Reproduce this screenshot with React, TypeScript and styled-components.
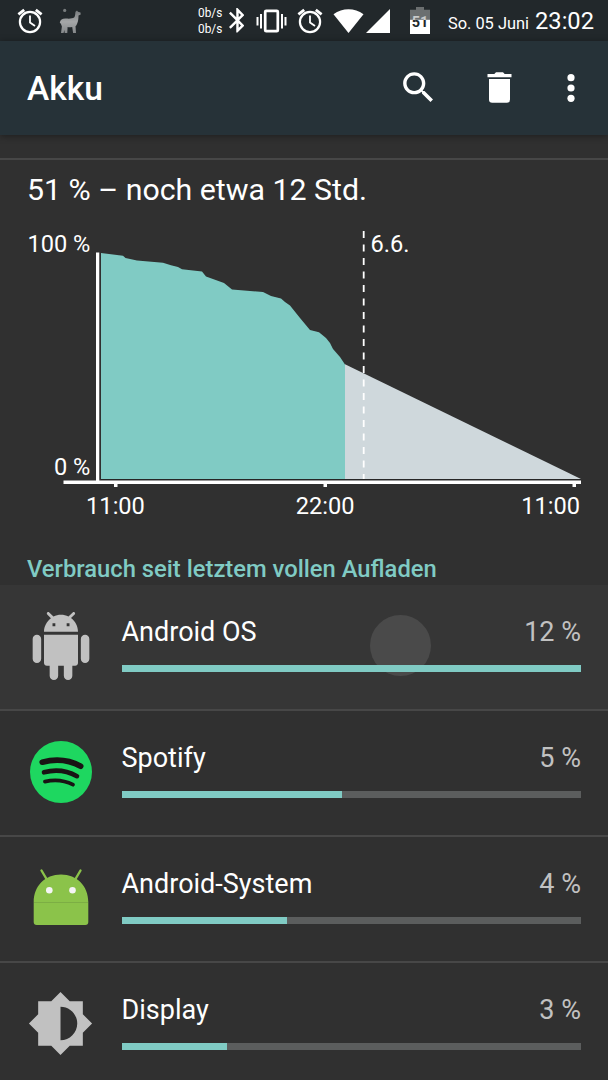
import React from "react";
import styled, { createGlobalStyle } from "styled-components";

const GlobalStyle = createGlobalStyle`
  * { box-sizing: border-box; }
  body {
    margin: 0;
    background: #303030;
    color: #fff;
    font-family: Roboto, "Liberation Sans", sans-serif;
  }
`;

const Screen = styled.div`
  width: 608px;
  height: 1080px;
  overflow: hidden;
  display: flex;
  flex-direction: column;
  background: #303030;
`;

const StatusBar = styled.header`
  height: 41px;
  flex: none;
  display: flex;
  align-items: center;
  padding: 0 14px 0 17px;
  background: #22282b;
`;

const StatusIcon = styled.svg<{ $gap?: number }>`
  flex: none;
  display: block;
  margin-left: ${(p) => p.$gap ?? 0}px;
`;

const Speed = styled.div`
  margin-left: 117px;
  width: 30.5px;
  white-space: nowrap;
  font-size: 13.6px;
  line-height: 15.5px;
  transform: scaleX(0.87);
  transform-origin: left center;
`;

const DateText = styled.span`
  margin-left: auto;
  font-size: 16.4px;
  line-height: 24px;
  padding-top: 6px;
  white-space: nowrap;
`;

const Clock = styled.span`
  margin-left: 6px;
  font-size: 23.7px;
  line-height: 28px;
  padding-top: 1px;
`;

const AppBar = styled.div`
  position: relative;
  height: 94px;
  flex: none;
  display: flex;
  align-items: center;
  padding: 0 16px 0 27px;
  background: #263238;
  box-shadow: 0 1px 7px rgba(0, 0, 0, 0.4);
`;

const Title = styled.h1`
  margin: 2px auto 0 0;
  font-size: 33.5px;
  line-height: 40px;
  font-weight: 500;
`;

const Actions = styled.div`
  display: flex;
  align-items: center;
`;

const ActionButton = styled.button<{ $width: number; $gap?: number }>`
  width: ${(p) => p.$width}px;
  height: 82px;
  margin-left: ${(p) => p.$gap ?? 0}px;
  padding: 0 0 1px;
  border: 0;
  background: none;
  color: #fff;
  display: flex;
  align-items: center;
  justify-content: center;
`;

const Divider = styled.div`
  height: 2px;
  flex: none;
  margin-top: 23px;
  background: #474747;
`;

const Summary = styled.div`
  flex: none;
  padding: 12px 27px;
  font-size: 30.3px;
  line-height: 36px;
`;

const Chart = styled.svg`
  display: block;
  flex: none;
  font-size: 23.6px;
  fill: #fff;
`;

const Category = styled.h2`
  margin: 0;
  height: 55px;
  flex: none;
  padding: 25px 27px 0;
  font-size: 23.78px;
  line-height: 28px;
  font-weight: 500;
  color: #80cbc4;
`;

const Row = styled.div<{ $pressed?: boolean }>`
  position: relative;
  height: 126px;
  flex: none;
  display: flex;
  padding-right: 27px;
  border-bottom: 2px solid #474747;
  background: ${(p) => (p.$pressed ? "#363636" : "transparent")};
`;

const IconCell = styled.div`
  width: 121.5px;
  height: 121px;
  flex: none;
  display: flex;
  align-items: center;
  justify-content: center;
`;

const RowBody = styled.div`
  position: relative;
  flex: 1;
  padding-top: 31px;
`;

const Labels = styled.div`
  display: flex;
  justify-content: space-between;
  font-size: 27px;
  line-height: 32px;
`;

const Percent = styled.span`
  color: #c1c1c1;
`;

const Track = styled.div`
  margin-top: 17px;
  height: 7px;
  background: #5b5d5d;
`;

const Fill = styled.div`
  height: 100%;
  background: #80cbc4;
`;

const Touch = styled.div`
  position: absolute;
  left: 370px;
  top: 30px;
  width: 61px;
  height: 61px;
  border-radius: 50%;
  background: #4a4a4a;
`;

const AlarmIcon = ({ gap }: { gap?: number }) => (
  <StatusIcon $gap={gap} width="26" height="26" viewBox="0 0 26 26" fill="none" stroke="#fff">
    <circle cx="13" cy="14" r="10.1" strokeWidth="2.2" />
    <path d="M13 7.5v7l5 3.6" strokeWidth="1.8" />
    <path d="M1.4 6.4 7.2 1.8M24.6 6.4 18.8 1.8" strokeWidth="2.8" />
  </StatusIcon>
);

const LlamaIcon = () => (
  <StatusIcon $gap={16} width="22" height="26" viewBox="0 0 22 26">
    <defs>
      <linearGradient id="llama" x1="0" y1="0" x2="0" y2="1">
        <stop offset="0" stopColor="#777b7d" />
        <stop offset="0.5" stopColor="#a5a7a8" />
        <stop offset="1" stopColor="#85888a" />
      </linearGradient>
    </defs>
    <circle cx="5.7" cy="2.4" r="1.6" fill="#777b7d" />
    <path
      fill="url(#llama)"
      d="M.8 14.8C1.2 11.4 3.600 10.300 7 10.500c3.400.3 6.200.2 8.400-1.300.9-1.500.8-3.300 1.100-5.500L18 2.600l1 1.200 2.500.8.2 2-2.200.8c0 3-.3 5.600-1.300 8-.5 1.300-1 2.200-1.700 2.800L17 25h-2.900l-.9-6.100c-1.800.4-3.300.4-4.600.1L8.300 25H5.700l-.4-3-.7 3H2l.9-6.600-1-2.600z"
    />
  </StatusIcon>
);

const BluetoothIcon = () => (
  <StatusIcon width="15.5" height="24.6" viewBox="5 1.9 12.8 20.2" preserveAspectRatio="none" fill="#fff">
    <path d="M17.71 7.71L12 2h-1v7.59L6.41 5 5 6.41 10.59 12 5 17.59 6.41 19 11 14.41V22h1l5.71-5.71-4.3-4.29 4.3-4.29zM13 5.83l1.88 1.88L13 9.59V5.83zm1.88 10.46L13 18.17v-3.76l1.88 1.88z" />
  </StatusIcon>
);

const VibrateIcon = () => (
  <StatusIcon $gap={12} width="31" height="24" viewBox="0 0 31 24" fill="#fff">
    <rect x="9.2" y="1.8" width="12.6" height="20.4" rx="1" fill="none" stroke="#fff" strokeWidth="2.7" />
    <rect x="0.5" y="8" width="2" height="8.5" />
    <rect x="4" y="5" width="2" height="14.5" />
    <rect x="25" y="5" width="2" height="14.5" />
    <rect x="28.5" y="8" width="2" height="8.5" />
  </StatusIcon>
);

const WifiIcon = () => (
  <StatusIcon $gap={10} width="31" height="24" viewBox="0 0 31 24" fill="#fff">
    <path d="M.5 5.2C9.5-1.3 21.5-1.3 30.5 5.2L15.5 24z" />
  </StatusIcon>
);

const SignalIcon = () => (
  <StatusIcon $gap={2} width="24" height="24" viewBox="0 0 24 24" fill="#fff">
    <path d="M24 0v24H0z" />
  </StatusIcon>
);

const BatteryIcon = () => (
  <StatusIcon $gap={20} width="20" height="27" viewBox="0 0 20 27">
    <defs>
      <linearGradient id="digits" gradientUnits="userSpaceOnUse" x1="0" y1="0" x2="0" y2="27">
        <stop offset="0.47" stopColor="#c9cbcb" />
        <stop offset="0.47" stopColor="#22282b" />
      </linearGradient>
    </defs>
    <path fill="#6b6f70" d="M6 0h8v2.8h6V13H0V2.8h6z" />
    <path fill="#fff" d="M0 12.8h20V27H0z" />
    <text x="10" y="19.8" textAnchor="middle" fontSize="14.5" fontWeight="700" fill="url(#digits)">
      51
    </text>
  </StatusIcon>
);

const SearchIcon = () => (
  <svg width="41" height="41" viewBox="0 0 24 24" fill="currentColor">
    <path d="M15.5 14h-.79l-.28-.27C15.41 12.59 16 11.11 16 9.5 16 5.91 13.09 3 9.5 3S3 5.91 3 9.5 5.91 16 9.5 16c1.61 0 3.09-.59 4.23-1.57l.27.28v.79l5 4.99L20.49 19l-4.99-5zm-6 0C7.01 14 5 11.99 5 9.5S7.01 5 9.5 5 14 7.01 14 9.5 11.99 14 9.5 14z" />
  </svg>
);

const TrashIcon = () => (
  <svg width="25" height="31" viewBox="0 0 25 31" fill="currentColor">
    <path d="M.5 2h6.8L9 .2h7L17.7 2h6.8v3.2H.5zM2 7h21v20.5q0 3.2-3.2 3.2H5.2Q2 30.7 2 27.5z" />
  </svg>
);

const MoreIcon = () => (
  <svg width="8" height="28" viewBox="0 0 8 28" fill="currentColor">
    <circle cx="4" cy="3.7" r="3.6" />
    <circle cx="4" cy="14" r="3.6" />
    <circle cx="4" cy="24.3" r="3.6" />
  </svg>
);

const AndroidOsIcon = () => (
  <svg width="68" height="68" viewBox="0 0 24 24" fill="#c1c1c1">
    <path d="M6 18c0 .55.45 1 1 1h1v3.5c0 .83.67 1.5 1.5 1.5s1.5-.67 1.5-1.5V19h2v3.5c0 .83.67 1.5 1.5 1.5s1.5-.67 1.5-1.5V19h1c.55 0 1-.45 1-1V8H6v10zM3.5 8C2.67 8 2 8.67 2 9.5v7c0 .83.67 1.5 1.5 1.5S5 17.33 5 16.5v-7C5 8.67 4.33 8 3.5 8zm17 0c-.83 0-1.5.67-1.5 1.5v7c0 .83.67 1.5 1.5 1.5s1.5-.67 1.5-1.5v-7c0-.83-.67-1.5-1.5-1.5zm-4.97-5.84l1.3-1.3c.2-.2.2-.51 0-.71-.2-.2-.51-.2-.71 0l-1.48 1.48C13.85 1.23 12.95 1 12 1c-.96 0-1.86.23-2.66.63L7.85.15c-.2-.2-.51-.2-.71 0-.2.2-.2.51 0 .71l1.31 1.31C6.97 3.26 6 5.01 6 7h12c0-1.99-.97-3.75-2.47-4.84zM10 5H9V4h1v1zm5 0h-1V4h1v1z" />
  </svg>
);

const SpotifyIcon = () => (
  <svg width="62" height="62" viewBox="0 0 62 62" fill="none" stroke="#191414" strokeLinecap="round">
    <circle cx="31" cy="31" r="31" fill="#1ed760" stroke="none" />
    <path d="M12.2 21.2Q33 15.6 50.7 25.2" strokeWidth="5.6" />
    <path d="M14 31.3Q31.5 26.6 47 35.2" strokeWidth="4.6" />
    <path d="M14.9 40.6Q30 36.9 43 43.7" strokeWidth="3.7" />
  </svg>
);

const AndroidSystemIcon = () => (
  <svg width="56" height="60" viewBox="0 0 56 60">
    <path d="M8.5 2.5 15 13.5M47.5 2.5 41 13.5" stroke="#8bc34a" strokeWidth="2.4" strokeLinecap="round" />
    <path
      d="M.7 34C.7 18 12 6.5 28 6.5S55.3 18 55.3 34v20q0 3-3 3H3.7q-3 0-3-3z"
      fill="#8bc34a"
    />
    <path d="M1 34.5h54" stroke="#79a842" strokeWidth="0.8" />
    <circle cx="16.3" cy="22.2" r="3.3" fill="#f5f5f5" />
    <circle cx="39.5" cy="22.2" r="3.3" fill="#f5f5f5" />
  </svg>
);

const DisplayIcon = () => (
  <svg width="67" height="67" viewBox="0 0 24 24" fill="#c1c1c1">
    <path d="M20 15.31L23.31 12 20 8.69V4h-4.69L12 .69 8.69 4H4v4.69L.69 12 4 15.31V20h4.69L12 23.31 15.31 20H20v-4.69zM12 18V6c3.31 0 6 2.69 6 6s-2.69 6-6 6z" />
  </svg>
);

const BatteryChart = () => (
  <Chart width="608" height="310" viewBox="0 220 608 310">
    <path
      fill="#80cbc4"
      d="M101 253 123 255.8 125.5 258 137 260.4 163 262.7 171 265.2 178 267 182 269.3 202 271.5 206 276.5 224 283 232 289.5 263 292 271 296 281 298.5 285 302 290 305.5 300 318 310 330 319 332.3 326 338 330 343 333 349 340 357 345 364.5V479H101z"
    />
    <path fill="#cfd8dc" d="M345 364.3 581 479H345z" />
    <path d="M99.5 253v226M101 479.5H581" stroke="#222" strokeWidth="1" opacity="0.7" />
    <path d="M363.7 231V479" stroke="#fff" strokeWidth="1.8" strokeDasharray="7 6.5" />
    <path d="M96 252.5h3.3V480.6H581V484h-5v3h-3.5v-3H327v3h-3.5v-3H117.5v3H114v-3H63.5v-3.4H96z" />
    <text x="90.3" y="252.4" textAnchor="end">100 %</text>
    <text x="90.3" y="475.4" textAnchor="end">0 %</text>
    <text x="370.5" y="252.4">6.6.</text>
    <text x="115.5" y="513.6" textAnchor="middle">11:00</text>
    <text x="325.2" y="513.6" textAnchor="middle">22:00</text>
    <text x="580" y="513.6" textAnchor="end">11:00</text>
  </Chart>
);

const consumers = [
  { name: "Android OS", percent: 12, fill: 100, icon: <AndroidOsIcon />, pressed: true },
  { name: "Spotify", percent: 5, fill: 48, icon: <SpotifyIcon /> },
  { name: "Android-System", percent: 4, fill: 36, icon: <AndroidSystemIcon /> },
  { name: "Display", percent: 3, fill: 23, icon: <DisplayIcon /> },
];

export default function App() {
  return (
    <>
      <GlobalStyle />
      <Screen>
        <StatusBar>
          <AlarmIcon />
          <LlamaIcon />
          <Speed>
            <div>0b/s</div>
            <div>0b/s</div>
          </Speed>
          <BluetoothIcon />
          <VibrateIcon />
          <AlarmIcon gap={10} />
          <WifiIcon />
          <SignalIcon />
          <BatteryIcon />
          <DateText>So. 05 Juni</DateText>
          <Clock>23:02</Clock>
        </StatusBar>
        <AppBar>
          <Title>Akku</Title>
          <Actions>
            <ActionButton $width={81}>
              <SearchIcon />
            </ActionButton>
            <ActionButton $width={81}>
              <TrashIcon />
            </ActionButton>
            <ActionButton $width={42} $gap={10}>
              <MoreIcon />
            </ActionButton>
          </Actions>
        </AppBar>
        <Divider />
        <Summary>51 % – noch etwa 12 Std.</Summary>
        <BatteryChart />
        <Category>Verbrauch seit letztem vollen Aufladen</Category>
        {consumers.map((c) => (
          <Row key={c.name} $pressed={c.pressed}>
            {c.pressed && <Touch />}
            <IconCell>{c.icon}</IconCell>
            <RowBody>
              <Labels>
                <span>{c.name}</span>
                <Percent>{c.percent} %</Percent>
              </Labels>
              <Track>
                <Fill style={{ width: `${c.fill}%` }} />
              </Track>
            </RowBody>
          </Row>
        ))}
      </Screen>
    </>
  );
}
